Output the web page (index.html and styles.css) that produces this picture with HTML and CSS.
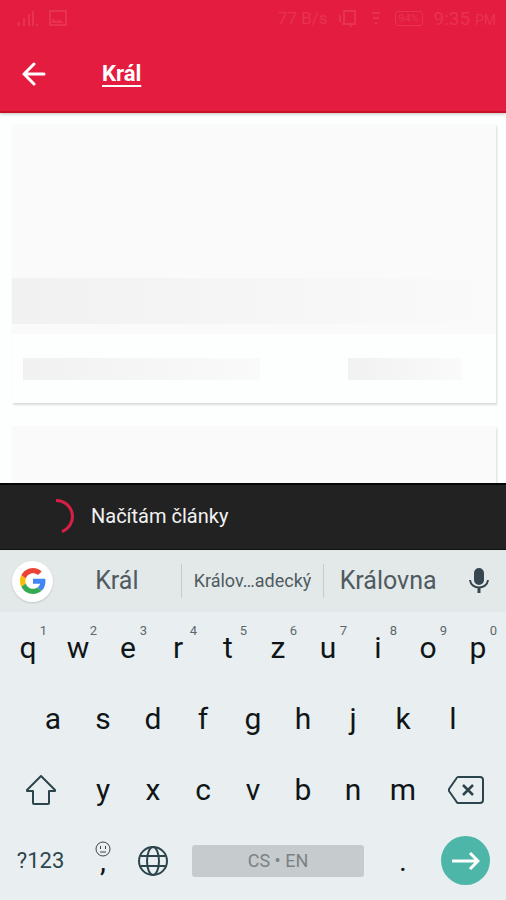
FILE: index.html
```html
<!DOCTYPE html>
<html lang="cs">
<head>
    <meta charset="UTF-8">
    <meta name="viewport" content="width=device-width, initial-scale=1.0">
    <title>Král</title>
    <link rel="stylesheet" href="styles.css">
</head>
<body>
    <header class="header">
        <div class="status-bar">
            <svg width="20" height="16" viewBox="0 0 20 16" fill="currentColor"><path d="M0 12h2v4H0zM5 8h2v8H5zM10 4h2v12h-2zM14 1h2v15h-2zM18 14h2v2h-2z"/></svg>
            <svg width="18" height="16" viewBox="0 0 18 16" fill="none" stroke="currentColor" stroke-width="2"><path d="M1 1h16v14H1z"/><path d="M3 13V8l4 3 4-1 4 3z" fill="currentColor" stroke="none"/></svg>
            <span class="status-speed">77 B/s</span>
            <svg class="status-phone" width="18" height="18" viewBox="0 0 18 18" fill="none" stroke="currentColor" stroke-width="2"><path d="M5 2h11v13H5zM1 6v7M3 15h5M12 15v3"/></svg>
            <svg class="status-wifi" width="8" height="14" viewBox="0 0 8 14" fill="none" stroke="currentColor" stroke-width="2"><path d="M0 2h8M1 7h6M3 12h2"/></svg>
            <span class="status-battery">94%</span>
            <span class="status-time">9:35 <small>PM</small></span>
        </div>
        <div class="search-bar">
            <button class="back-button" aria-label="Zpět">
                <svg width="24" height="24" viewBox="0 0 24 24" fill="none" stroke="currentColor" stroke-width="3" stroke-linecap="round"><path d="M22 12H2M12 2L2 12l10 10"/></svg>
            </button>
            <input class="search-input" type="text" value="Král" aria-label="Hledat">
        </div>
    </header>

    <main class="feed">
        <div class="card">
            <div class="card-image"><div class="placeholder card-title"></div></div>
            <div class="card-footer">
                <div class="placeholder card-source"></div>
                <div class="placeholder card-date"></div>
            </div>
        </div>
        <div class="card">
            <div class="card-image"><div class="placeholder card-title"></div></div>
            <div class="card-footer">
                <div class="placeholder card-source"></div>
                <div class="placeholder card-date"></div>
            </div>
        </div>
    </main>

    <div class="loading" role="status">
        <svg class="spinner" width="36" height="36" viewBox="0 0 36 36" fill="none" stroke="#d81f46" stroke-width="3"><path d="M15 2.500A16 16 0 0 1 21 33.500"/></svg>
        <span>Načítám články</span>
    </div>

    <div class="keyboard">
        <div class="suggestions">
            <button class="google-button" aria-label="Google">
                <svg width="26" height="26" viewBox="0 0 48 48">
                    <path fill="#EA4335" d="M24 9.500c3.540 0 6.710 1.220 9.210 3.600l6.850-6.850C35.900 2.380 30.470 0 24 0 14.620 0 6.510 5.380 2.560 13.220l7.980 6.190C12.430 13.720 17.740 9.500 24 9.500z"/>
                    <path fill="#4285F4" d="M46.980 24.550c0-1.570-.15-3.090-.38-4.550H24v9.020h12.940c-.58 2.960-2.260 5.480-4.780 7.180l7.730 6c4.510-4.180 7.090-10.360 7.090-17.650z"/>
                    <path fill="#FBBC05" d="M10.530 28.590c-.48-1.450-.76-2.990-.76-4.590s.27-3.140.76-4.590l-7.980-6.190C.92 16.460 0 20.120 0 24s.92 7.540 2.560 10.780l7.970-6.190z"/>
                    <path fill="#34A853" d="M24 48c6.480 0 11.930-2.130 15.890-5.810l-7.730-6c-2.150 1.450-4.920 2.300-8.160 2.300-6.260 0-11.570-4.220-13.470-9.910l-7.980 6.190C6.510 42.620 14.620 48 24 48z"/>
                </svg>
            </button>
            <button class="suggestion">Král</button>
            <button class="suggestion suggestion-long">Králov…adecký</button>
            <button class="suggestion">Královna</button>
            <button class="mic-button" aria-label="Hlasové zadávání">
                <svg width="20" height="26" viewBox="0 0 20 26" fill="none" stroke="currentColor" stroke-width="2"><rect x="6" y="1" width="8" height="15" rx="4" fill="currentColor"/><path d="M1 12c1 10 17 10 18 0"/><path d="M10 19v6" stroke-width="3"/></svg>
            </button>
        </div>
        <div class="keys">
            <div class="row">
                <button class="key">q<span class="hint">1</span></button>
                <button class="key">w<span class="hint">2</span></button>
                <button class="key">e<span class="hint">3</span></button>
                <button class="key">r<span class="hint">4</span></button>
                <button class="key">t<span class="hint">5</span></button>
                <button class="key">z<span class="hint">6</span></button>
                <button class="key">u<span class="hint">7</span></button>
                <button class="key">i<span class="hint">8</span></button>
                <button class="key">o<span class="hint">9</span></button>
                <button class="key">p<span class="hint">0</span></button>
            </div>
            <div class="row row-middle">
                <button class="key">a</button>
                <button class="key">s</button>
                <button class="key">d</button>
                <button class="key">f</button>
                <button class="key">g</button>
                <button class="key">h</button>
                <button class="key">j</button>
                <button class="key">k</button>
                <button class="key">l</button>
            </div>
            <div class="row">
                <button class="key key-wide" aria-label="Shift">
                    <svg width="32" height="30" viewBox="0 0 32 30" fill="none" stroke="currentColor" stroke-width="2" stroke-linejoin="round"><path d="M16 1L2 15v1h6v12q0 1 1 1h14q1 0 1-1V16h6v-1z"/></svg>
                </button>
                <button class="key">y</button>
                <button class="key">x</button>
                <button class="key">c</button>
                <button class="key">v</button>
                <button class="key">b</button>
                <button class="key">n</button>
                <button class="key">m</button>
                <button class="key key-wide" aria-label="Smazat">
                    <svg width="36" height="28" viewBox="0 0 36 28" fill="none" stroke="currentColor" stroke-width="2" stroke-linejoin="round"><path d="M10 1h22q3 0 3 3v20q0 3-3 3H10q-1 0-2-2L1 15v-2L8 3q1-2 2-2z"/><path d="M15 9l10 10M25 9L15 19" stroke-width="2.500"/></svg>
                </button>
            </div>
            <div class="row">
                <button class="key key-wide key-symbols">?123</button>
                <button class="key">,<svg class="smiley" width="16" height="16" viewBox="0 0 16 16" fill="none" stroke="currentColor" stroke-width="1"><circle cx="8" cy="8" r="7"/><path d="M5.500 5v3M10.500 5v3M5 11h6"/></svg></button>
                <button class="key" aria-label="Jazyk">
                    <svg width="30" height="30" viewBox="0 0 30 30" fill="none" stroke="currentColor" stroke-width="2"><circle cx="15" cy="15" r="14"/><ellipse cx="15" cy="15" rx="6" ry="14"/><path d="M2.500 10h25M2.500 20h25"/></svg>
                </button>
                <button class="key key-space"><span>CS • EN</span></button>
                <button class="key">.</button>
                <button class="key key-wide" aria-label="Hledat">
                    <span class="enter"><svg width="28" height="18" viewBox="0 0 28 18" fill="none" stroke="currentColor" stroke-width="3"><path d="M0 9h26M18 1l8 8-8 8"/></svg></span>
                </button>
            </div>
        </div>
    </div>
</body>
</html>
```
FILE: styles.css
```css
* {
    box-sizing: border-box;
}
body {
    font-family: Roboto, 'Liberation Sans', sans-serif;
    background-color: #fdfefe;
    margin: 0;
    height: 100vh;
    display: flex;
    flex-direction: column;
    overflow: hidden;
}
button {
    font-family: inherit;
    background: none;
    border: none;
    padding: 0;
    cursor: pointer;
    color: #36474f;
}
svg {
    display: block;
    flex: none;
}

/* Header */
.header {
    background-color: #e41c40;
    border-bottom: 2px solid #c90f24;
    box-shadow: 0 1px 3px rgba(0, 0, 0, 0.25);
    z-index: 1;
}
.status-bar {
    display: flex;
    align-items: center;
    height: 36px;
    padding: 0 10px 0 18px;
    gap: 11px;
    color: #e8334e;
    font-size: 17px;
}
.status-speed {
    margin-left: auto;
}
.status-wifi {
    margin: 0 4px;
}
.status-battery {
    border: 1px solid;
    border-radius: 3px;
    width: 28px;
    font-size: 11px;
    line-height: 13px;
    text-align: center;
}
.status-time {
    font-size: 19px;
}
.status-time small {
    font-size: 14px;
}
.search-bar {
    display: flex;
    align-items: center;
    height: 75px;
    padding: 0 22px;
    gap: 56px;
}
.back-button {
    color: white;
}
.search-input {
    flex: 1;
    min-width: 0;
    height: 32px;
    padding: 0;
    border: none;
    outline: none;
    background: none;
    color: white;
    font-family: inherit;
    font-size: 22px;
    line-height: 32px;
    font-weight: bold;
    text-decoration: underline;
    text-decoration-thickness: 2px;
    text-underline-offset: 4px;
}

/* Loading cards */
.feed {
    flex: 1;
    min-height: 0;
    overflow: hidden;
    padding: 11px 10px 0 12px;
}
.card {
    background-color: #fdfefe;
    margin-bottom: 23px;
    box-shadow: 1px 2px 2px rgba(0, 0, 0, 0.14);
}
.card-image {
    display: flex;
    align-items: flex-end;
    height: 210px;
    padding-bottom: 10px;
    background-color: #fafafa;
}
.placeholder {
    height: 22px;
    background: linear-gradient(to right, #f1f1f1, #fafafa);
}
.card-title {
    width: 100%;
    height: 46px;
}
.card-footer {
    display: flex;
    justify-content: space-between;
    padding: 24px 34px 23px 11px;
}
.card-source {
    width: 54%;
}
.card-date {
    width: 26%;
}

/* Loading message */
.loading {
    display: flex;
    align-items: center;
    gap: 14px;
    height: 67px;
    padding: 0 0 2px 41px;
    background-color: #222222;
    border-top: 2px solid #060606;
    border-bottom: 1px solid #111111;
    color: #f2f2f2;
    font-size: 20px;
}

/* Keyboard */
.keyboard {
    background-color: #e9eff0;
}
.suggestions {
    display: grid;
    grid-template-columns: 53px 8fr 9fr 8fr 54px;
    align-items: center;
    height: 62px;
    background-color: #e3e8e9;
}
.google-button {
    display: flex;
    align-items: center;
    justify-content: center;
    justify-self: end;
    width: 41px;
    height: 41px;
    border-radius: 50%;
    background-color: white;
    box-shadow: 0 1px 2px rgba(0, 0, 0, 0.15);
}
.suggestion {
    height: 34px;
    font-size: 25px;
    line-height: 34px;
    color: #4f5b60;
    white-space: nowrap;
}
.suggestion-long {
    border-left: 1px solid #c6cccd;
    border-right: 1px solid #c6cccd;
    font-size: 18px;
}
.mic-button {
    display: flex;
    justify-content: center;
}
.keys {
    padding: 0 3px 4px;
}
.row {
    display: flex;
    height: 71px;
}
.row-middle {
    padding: 0 5%;
}
.key {
    position: relative;
    display: flex;
    align-items: center;
    justify-content: center;
    flex: 2 1 0;
    min-width: 0;
    font-size: 30px;
    color: #101618;
}
.key svg {
    color: #2c454d;
}
.key-wide {
    flex-grow: 3;
}
.key-symbols {
    font-size: 22px;
    color: #2c454d;
}
.hint {
    position: absolute;
    top: 12px;
    right: 6px;
    font-size: 13px;
    line-height: 14px;
    color: #5d676b;
}
.key .smiley {
    position: absolute;
    top: 16px;
    color: #3a4447;
}
.key-space {
    flex-grow: 8;
}
.key-space span {
    flex: 1;
    margin: 0 14px;
    border-radius: 3px;
    background-color: #c6cbcd;
    color: #7b8285;
    font-size: 18px;
    line-height: 32px;
}
.enter {
    display: flex;
    align-items: center;
    justify-content: center;
    flex: none;
    width: 49px;
    height: 49px;
    border-radius: 50%;
    background-color: #4db6a8;
}
.key .enter svg {
    color: white;
}
```
